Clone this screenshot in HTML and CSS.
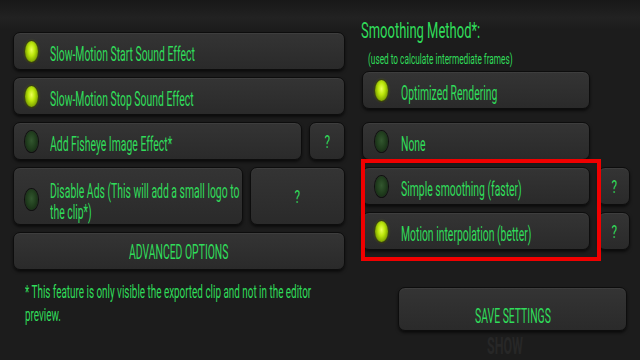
FILE: index.html
```html
<!DOCTYPE html>
<html lang="en">
<head>
    <meta charset="UTF-8">
    <meta name="viewport" content="width=device-width, initial-scale=1.0">
    <title>export settings</title>
    <link rel="stylesheet" href="styles.css">
</head>
<body>
    <div class="screen">
        <div class="left">
            <div class="row">
                <button class="opt"><i class="led on"></i><span class="t">Slow-Motion Start Sound Effect</span></button>
            </div>
            <div class="row">
                <button class="opt"><i class="led on"></i><span class="t">Slow-Motion Stop Sound Effect</span></button>
            </div>
            <div class="row">
                <button class="opt"><i class="led"></i><span class="t">Add Fisheye Image Effect*</span></button>
                <button class="help"><span class="q">?</span></button>
            </div>
            <div class="row tall">
                <button class="opt ads"><i class="led"></i><span class="t wrap">Disable Ads (This will add a small logo to the clip*)</span></button>
                <button class="help big"><span class="q">?</span></button>
            </div>
            <button class="wide"><span class="t caps">ADVANCED OPTIONS</span></button>
            <p class="note"><span class="t">* This feature is only visible the exported clip and not in the editor</span><span class="t">preview.</span></p>
        </div>

        <div class="right">
            <h2 class="title"><span class="t">Smoothing Method*:</span></h2>
            <p class="sub"><span class="t">(used to calculate intermediate frames)</span></p>
            <div class="list">
                <div class="row">
                    <button class="opt"><i class="led on"></i><span class="t">Optimized Rendering</span></button>
                </div>
                <div class="row none">
                    <button class="opt"><i class="led"></i><span class="t">None</span></button>
                </div>
                <div class="row">
                    <button class="opt"><i class="led"></i><span class="t">Simple smoothing (faster)</span></button>
                    <button class="help"><span class="q">?</span></button>
                </div>
                <div class="row">
                    <button class="opt"><i class="led on"></i><span class="t">Motion interpolation (better)</span></button>
                    <button class="help"><span class="q">?</span></button>
                </div>
                <div class="mark"></div>
            </div>
            <button class="save"><span class="t caps">SAVE SETTINGS</span></button>
            <div class="ghost"><span class="t">SHOW</span></div>
        </div>
    </div>
</body>
</html>
```

FILE: styles.css
```css
*{
    margin: 0;
    padding: 0;
    box-sizing: border-box;
}

body{
    width: 640px;
    height: 360px;
    overflow: hidden;
    background-color: #1b1b1b;
    font-family: Roboto, "Liberation Sans", sans-serif;
    color: #30dc5a;
}

.screen{
    display: flex;
    height: 360px;
    background:
        linear-gradient(#181818 0, #222 18px, #1c1c1c 30px, #1c1c1c 100%);
}

/* squeezed text, the capture is narrow */
.t{
    display: block;
    flex: none;
    width: max-content;
    white-space: nowrap;
    transform: scaleX(.52);
    transform-origin: 0 0;
}

button{
    font-family: inherit;
    color: inherit;
    border: 1px solid #0d0d0d;
    border-radius: 7px;
    background: linear-gradient(#343434, #2a2a2a);
    box-shadow: inset 0 1px 0 rgba(255,255,255,.05), 0 2px 3px rgba(0,0,0,.6);
    cursor: pointer;
}

.left{
    width: 332px;
    margin-left: 13px;
    padding-top: 32px;
    display: flex;
    flex-direction: column;
    gap: 7px;
}

.row{
    display: flex;
    gap: 7px;
    height: 38px;
}

.opt{
    flex: 1;
    min-width: 0;
    display: flex;
    align-items: center;
    gap: 12px;
    padding-left: 11px;
    text-align: left;
}

.opt .t{
    font-size: 20px;
    line-height: 20px;
    margin-top: 6px;
}

.led{
    flex: none;
    width: 13px;
    height: 21px;
    border-radius: 50%;
    background: radial-gradient(ellipse at 50% 45%, #33572f 0, #22401f 45%, #10200f 100%);
    box-shadow: 0 0 0 1px #111;
}

.led.on{
    background: radial-gradient(ellipse at 50% 42%, #eaff5a 0, #bde80c 35%, #7fa400 70%, #3d4d0c 100%);
    box-shadow: 0 0 3px rgba(170,220,20,.45), 0 0 0 1px #2a2a10;
}

.help{
    flex: none;
    width: 36px;
    display: flex;
    align-items: center;
    justify-content: center;
}

.help.big{
    width: 95px;
}

.q{
    font-size: 18px;
    transform: scaleX(.65);
}

.row.tall{
    height: 58px;
}

.ads{
    align-items: flex-start;
    padding-top: 13px;
}

.ads .led{
    margin-top: 8px;
}

.ads .t.wrap{
    white-space: normal;
    width: 386px;
    line-height: 21px;
    margin-top: 0;
}

.wide{
    height: 38px;
    display: flex;
    justify-content: center;
    padding-top: 9px;
}

.caps{
    font-size: 20px;
    line-height: 20px;
    transform-origin: 50% 0;
}

.note{
    margin-left: 12px;
    margin-top: 3px;
    font-size: 18px;
    line-height: 23px;
}

.note .t{
    transform: scaleX(.55);
}

.right{
    width: 269px;
    margin-left: 16px;
    display: flex;
    flex-direction: column;
}

.title{
    margin-top: 18px;
    font-weight: normal;
    font-size: 22px;
    line-height: 25px;
}

.title .t{
    transform: scaleX(.59);
}

.sub{
    margin-top: 8px;
    margin-left: 7px;
    font-size: 14px;
    line-height: 16px;
}

.sub .t{
    transform: scaleX(.59);
}

.list{
    position: relative;
    margin-top: 4px;
    margin-left: 1px;
    display: flex;
    flex-direction: column;
    gap: 7px;
}

.list .opt{
    flex: none;
    width: 228px;
    padding-left: 12px;
    gap: 13px;
}

.list .row.none{
    margin-top: 6px;
}

.list .help{
    width: 32px;
    margin-left: 1px;
}

.mark{
    position: absolute;
    left: -1px;
    top: 88px;
    width: 240px;
    height: 102px;
    border: 4px solid #f00000;
}

.save{
    margin-top: 37px;
    margin-left: 37px;
    width: 229px;
    height: 44px;
    flex: none;
    display: flex;
    justify-content: center;
    padding-top: 18px;
}

.ghost{
    margin-top: 5px;
    margin-left: 126px;
    font-size: 24px;
    line-height: 20px;
    font-weight: bold;
    color: #272727;
}
```
